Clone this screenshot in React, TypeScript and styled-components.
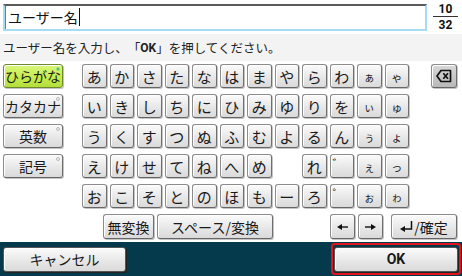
import React from 'react';
import styled, { createGlobalStyle, css } from "styled-components";

const GlobalStyle = createGlobalStyle`
    html, body {
        margin: 0;
        padding: 0;
        background: #ffffff;
    }
    body {
        font-family: "Noto Sans CJK JP", "Noto Sans", sans-serif;
        color: #111;
        text-spacing-trim: space-all;
    }
    #root {
        width: 462px;
        height: 276px;
        overflow: hidden;
    }
`

const rows: string[][] = [
    ['あ', 'か', 'さ', 'た', 'な', 'は', 'ま', 'や', 'ら', 'わ', 'ぁ', 'ゃ'],
    ['い', 'き', 'し', 'ち', 'に', 'ひ', 'み', 'ゆ', 'り', 'を', 'ぃ', 'ゅ'],
    ['う', 'く', 'す', 'つ', 'ぬ', 'ふ', 'む', 'よ', 'る', 'ん', 'ぅ', 'ょ'],
    ['え', 'け', 'せ', 'て', 'ね', 'へ', 'め', '', 'れ', '゛', 'ぇ', 'っ'],
    ['お', 'こ', 'そ', 'と', 'の', 'ほ', 'も', 'ー', 'ろ', '゜', 'ぉ', 'ゎ'],
]

const smallKana = 'ぁゃぃゅぅょぇぉゎっ'

const modes = [
    {label: 'ひらがな', active: true},
    {label: 'カタカナ', active: false},
    {label: '英数', active: false},
    {label: '記号', active: false},
]

const keyLook = css`
    box-sizing: border-box;
    border: 1px solid #8c8c8c;
    border-right-color: #6f6f6f;
    border-bottom-color: #666;
    border-radius: 3px;
    background: linear-gradient(#fbfbfb, #e6e6e6 60%, #dadada);
    box-shadow: inset 1px 1px 0 #ffffff, 1px 1px 0 #c4c4c4;
    display: flex;
    align-items: center;
    justify-content: center;
    color: #1a1a1a;
    font-family: "Noto Sans CJK JP", "Noto Sans", sans-serif;
`

export default function App() {
    return (
        <Screen>
            <GlobalStyle/>
            <TopBar>
                <InputBox>
                    <InputText>ユーザー名</InputText>
                    <Caret/>
                </InputBox>
                <Counter>
                    <span>10</span>
                    <CounterLine/>
                    <span>32</span>
                </Counter>
            </TopBar>
            <Help>ユーザー名を入力し、「<b>OK</b>」を押してください。</Help>
            <Keyboard>
                <KeyArea>
                    <ModeColumn>
                        {modes.map(m => (
                            <ModeKey key={m.label} $active={m.active}>
                                {m.label}
                                <Dot $active={m.active}/>
                            </ModeKey>
                        ))}
                    </ModeColumn>
                    <KanaGrid>
                        {rows.flat().map((ch, i) =>
                            ch === ''
                                ? <span key={i}/>
                                : <KanaKey key={i} $small={smallKana.includes(ch)} $mark={ch === '゛' || ch === '゜'}>{ch}</KanaKey>
                        )}
                    </KanaGrid>
                    <BackKey>
                        <svg width="16" height="14" viewBox="0 0 16 14">
                            <path d="M5 1.5 H14.5 V12.5 H5 L1 7 Z" fill="none" stroke="#111" strokeWidth="1.7" strokeLinejoin="round"/>
                            <path d="M7.3 4.3 L12 9.7 M12 4.3 L7.3 9.7" stroke="#111" strokeWidth="1.7"/>
                        </svg>
                    </BackKey>
                </KeyArea>
                <BottomKeys>
                    <KeyGroup>
                        <WideKey $w={51}>無変換</WideKey>
                        <WideKey $w={116}>スペース/変換</WideKey>
                    </KeyGroup>
                    <KeyGroup>
                        <WideKey $w={25}>
                            <svg width="11" height="8" viewBox="0 0 11 8">
                                <path d="M11 4 H4" stroke="#111" strokeWidth="1.4"/>
                                <path d="M0 4 L5 1 V7 Z" fill="#111"/>
                            </svg>
                        </WideKey>
                        <WideKey $w={25}>
                            <svg width="11" height="8" viewBox="0 0 11 8">
                                <path d="M0 4 H7" stroke="#111" strokeWidth="1.4"/>
                                <path d="M11 4 L6 1 V7 Z" fill="#111"/>
                            </svg>
                        </WideKey>
                        <WideKey $w={66} $gapLeft={5}>
                            <svg width="13" height="11" viewBox="0 0 13 11">
                                <path d="M11.5 0 V8 H4" fill="none" stroke="#111" strokeWidth="1.5"/>
                                <path d="M0 8 L5 5 V11 Z" fill="#111"/>
                            </svg>
                            <span>/確定</span>
                        </WideKey>
                    </KeyGroup>
                </BottomKeys>
            </Keyboard>
            <Footer>
                <FooterButton $w={123}>キャンセル</FooterButton>
                <OkFrame>
                    <FooterButton $w={124} $bold>OK</FooterButton>
                </OkFrame>
            </Footer>
        </Screen>
    );
}

const Screen = styled.div`
    width: 462px;
    height: 276px;
    display: flex;
    flex-direction: column;
    background: #ffffff;
`

const TopBar = styled.div`
    display: flex;
    align-items: center;
    padding: 3px 4px 3px 3px;
    gap: 6px;
`

const InputBox = styled.div`
    box-sizing: border-box;
    width: 424px;
    height: 27px;
    border: 2px solid #a6dcf3;
    border-top: 2px solid #5a5a5a;
    box-shadow: inset 1px 0 0 #7a7a7a;
    background: #fff;
    display: flex;
    align-items: center;
    padding-left: 3px;
`

const InputText = styled.span`
    font-size: 14px;
    color: #111;
`

const Caret = styled.span`
    width: 1px;
    height: 18px;
    background: #111;
    margin-left: 1px;
`

const Counter = styled.div`
    width: 25px;
    display: flex;
    flex-direction: column;
    align-items: center;
    font-family: "Roboto", "Liberation Sans", sans-serif;
    font-weight: 700;
    font-size: 12px;
    line-height: 12px;
    color: #111;
`

const CounterLine = styled.div`
    width: 25px;
    height: 1px;
    background: #333;
    margin: 1px 0 2px;
`

const Help = styled.div`
    height: 27px;
    background: #f3f3f3;
    display: flex;
    align-items: center;
    padding-left: 3px;
    font-size: 12.5px;
    color: #222;
    text-spacing-trim: space-all;

    b {
        font-family: "Roboto", "Liberation Sans", sans-serif;
        font-weight: 700;
        font-size: 12px;
    }
`

const Keyboard = styled.div`
    display: flex;
    flex-direction: column;
    padding: 3px 5px 0 3px;
`

const KeyArea = styled.div`
    display: flex;
    align-items: flex-start;
`

const ModeColumn = styled.div`
    display: flex;
    flex-direction: column;
    gap: 6px;
    width: 60px;
    margin-right: 19px;
`

const ModeKey = styled.div<{ $active: boolean }>`
    ${keyLook};
    position: relative;
    height: 24px;
    font-size: 14px;
    ${p => p.$active && css`
        background: linear-gradient(#d9f77c, #c4ec4c 60%, #b4de3c);
        border-color: #6e8a2a;
    `}
`

const Dot = styled.span<{ $active: boolean }>`
    position: absolute;
    top: 2px;
    right: 2px;
    width: 4px;
    height: 4px;
    border-radius: 50%;
    box-sizing: border-box;
    border: 1px solid ${p => p.$active ? '#8bdc9a' : '#b8b8b8'};
    background: ${p => p.$active ? '#3fbf45' : '#f4f4f4'};
`

const KanaGrid = styled.div`
    display: grid;
    grid-template-columns: repeat(12, 24.5px);
    grid-auto-rows: 24px;
    column-gap: 3px;
    row-gap: 6px;
`

const KanaKey = styled.div<{ $small: boolean, $mark: boolean }>`
    ${keyLook};
    font-size: ${p => p.$small ? '11px' : '15px'};
    padding-top: ${p => p.$small ? '2px' : '0'};
    ${p => p.$mark && css`
        align-items: flex-start;
        justify-content: flex-start;
        font-size: 12px;
        padding: 0 0 0 2px;
    `}
`

const BackKey = styled.div`
    ${keyLook};
    width: 26px;
    height: 24px;
    margin-left: auto;
    background: linear-gradient(#d8d8d8, #c6c6c6 60%, #b9b9b9);
`

const BottomKeys = styled.div`
    display: flex;
    justify-content: space-between;
    margin-top: 6px;
    padding-left: 100px;
`

const KeyGroup = styled.div`
    display: flex;
    gap: 3px;
`

const WideKey = styled.div<{ $w: number, $gapLeft?: number }>`
    ${keyLook};
    width: ${p => p.$w}px;
    height: 25px;
    font-size: 14px;
    margin-left: ${p => p.$gapLeft ?? 0}px;
    gap: 1px;
`

const Footer = styled.div`
    margin-top: auto;
    height: 34px;
    background: #053a4c;
    display: flex;
    align-items: center;
    justify-content: space-between;
    padding: 0 1px 0 3px;
`

const FooterButton = styled.div<{ $w: number, $bold?: boolean }>`
    ${keyLook};
    width: ${p => p.$w}px;
    height: 25px;
    font-size: 14px;
    border-color: #555;
    box-shadow: inset 1px 1px 0 #fff, 1px 1px 0 #222;
    ${p => p.$bold && css`
        font-family: "Roboto", "Liberation Sans", sans-serif;
        font-weight: 700;
        font-size: 14px;
    `}
`

const OkFrame = styled.div`
    box-sizing: border-box;
    border: 2px solid #e3141c;
    border-radius: 4px;
    padding: 1px;
    height: 32px;
    display: flex;
    align-items: center;
`
